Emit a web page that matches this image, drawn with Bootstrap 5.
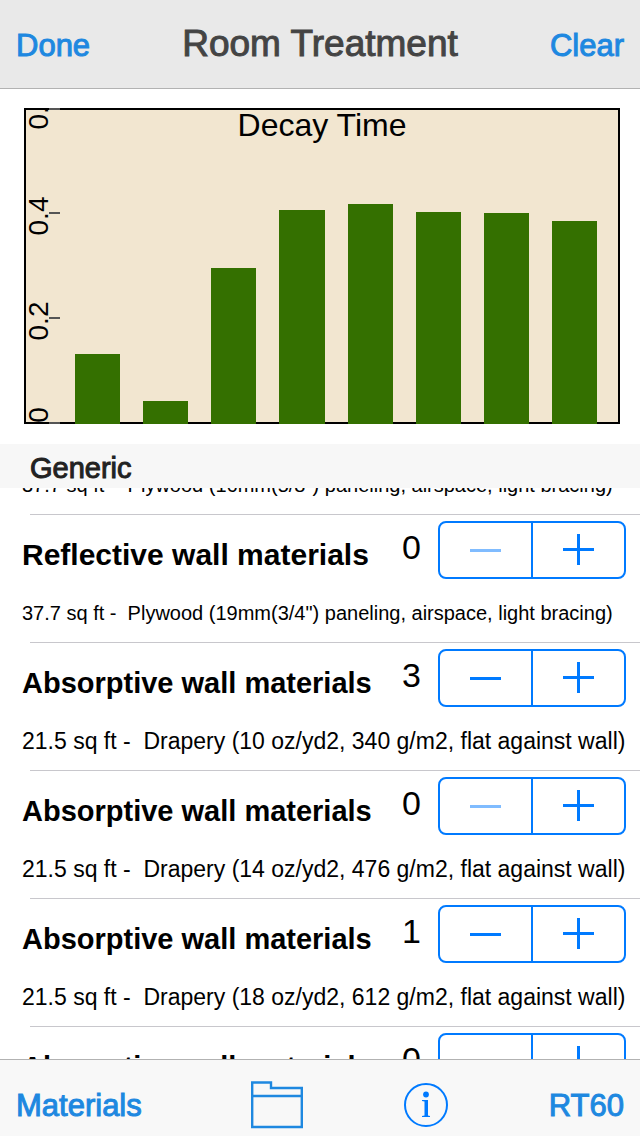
<!DOCTYPE html>
<html lang="en">
<head>
<meta charset="utf-8">
<meta name="viewport" content="width=device-width, initial-scale=1">
<title>Room Treatment</title>
<link href="https://cdn.jsdelivr.net/npm/bootstrap@5.3.0/dist/css/bootstrap.min.css" rel="stylesheet">
<style>
  body { font-family: "Liberation Sans", Arial, sans-serif; color: #000; background: #fff; }
  .medium { -webkit-text-stroke: 1px currentColor; }
  .app-link { font-size: 31px; line-height: 36px; color: #1e88e0; text-decoration: none; }
  .top-bar { background: #e9e9e9; border-bottom: 1px solid #b2b2b2; padding: 24px 16px; }
  .top-bar h1 { font-size: 37px; line-height: 40px; color: #444; font-weight: 400; }
  .chart { height: 316px; margin: 19px 20px 20px 24px; background: #f2e6d0; box-shadow: inset 0 0 0 2px #000; }
  .chart-title { font-size: 32px; line-height: 34px; }
  .axis { width: 51px; font-size: 28px; }
  .bars { gap: 23px; padding-right: 23px; }
  .bar { flex: 1 1 0; background: #347000; }
  .section-name { font-size: 29px; line-height: 44px; padding: 2px 30px 0; height: 44px; background: #f7f7f7; color: #222; }
  .scroller { min-height: 0; scrollbar-width: none; }
  .scroller::-webkit-scrollbar { display: none; }
  .material { padding: 6px 14px 0 22px; height: 127px; }
  .separator { height: 1px; margin-left: 30px; background: #c8c7cc; }
  .material h3 { font-size: 30px; line-height: 36px; padding-top: 16px; font-weight: 700; white-space: nowrap; }
  .material output { font-size: 34px; line-height: 40px; padding: 6px 17px 0 0; }
  .material p { font-size: 20px; line-height: 24px; margin-top: 22px; white-space: pre; }
  .material.absorptive h3 { font-size: 29px; }
  .material.absorptive p { font-size: 23px; }
  .stepper { width: 188px; height: 58px; border: 2px solid #007aff; border-radius: 8px; }
  .stepper button { flex: 1 1 0; padding: 0; border: 0; background: none; color: #007aff; }
  .stepper button + button { border-left: 2px solid #007aff; }
  .stepper button:disabled { color: #80bcff; }
  .bottom-bar { background: #f8f8f8; border-top: 1px solid #b2b2b2; height: 77px; padding: 13px 16px 0; }
  .bottom-bar .app-link { padding-top: 3px; }
  .icon-button { border: 0; padding: 0; background: none; }
</style>
</head>
<body>
<div class="vh-100 d-flex flex-column overflow-hidden">
  <header class="top-bar d-flex justify-content-between flex-shrink-0">
    <a href="#" class="app-link medium pt-1">Done</a>
    <h1 class="medium m-0">Room Treatment</h1>
    <a href="#" class="app-link medium pt-1">Clear</a>
  </header>

  <section class="chart d-flex flex-shrink-0 position-relative" aria-label="Decay Time">
    <div class="chart-title position-absolute top-0 start-0 w-100 text-center">Decay Time</div>
    <svg class="axis h-100 flex-shrink-0" viewBox="0 0 51 316">
      <g stroke="#555" stroke-width="2"><path d="M25 1h11M25 105h11M25 210h11M25 315h11"/></g>
      <g text-anchor="middle">
        <text transform="translate(24 2) rotate(-90)">0.6</text>
        <text transform="translate(24 108) rotate(-90)">0.4</text>
        <text transform="translate(24 213) rotate(-90)">0.2</text>
        <text transform="translate(24 307) rotate(-90)">0</text>
      </g>
    </svg>
    <div class="bars d-flex align-items-end flex-fill h-100" id="bars"></div>
  </section>

  <h2 class="section-name medium m-0 flex-shrink-0 fw-normal">Generic</h2>
  <main class="scroller flex-fill overflow-auto" id="scroller">
    <ul class="list-unstyled m-0" id="materials"></ul>
  </main>

  <footer class="bottom-bar d-flex justify-content-between align-items-center flex-shrink-0">
    <a href="#" class="app-link medium me-2">Materials</a>
    <button class="icon-button" aria-label="Open folder">
      <svg class="d-block" width="52" height="48" viewBox="0 0 52 48" fill="none" stroke="#1e88e0" stroke-width="2.400"><path d="M1.200 1.500H20V7H50.800V46H1.200ZM1.200 15H51" /></svg>
    </button>
    <button class="icon-button" aria-label="Information">
      <svg class="d-block" width="44" height="44" viewBox="0 0 44 44" fill="#007aff"><circle cx="22" cy="22" r="21" fill="none" stroke="#007aff" stroke-width="2"/><circle cx="22" cy="11.500" r="2.900"/><path d="M18 17H24V32.500L26 33V34H18V33L20.500 32.500V18.500L18 18Z"/></svg>
    </button>
    <a href="#" class="app-link medium">RT60</a>
  </footer>
</div>

<script src="https://cdn.jsdelivr.net/npm/bootstrap@5.3.0/dist/js/bootstrap.bundle.min.js"></script>
<script>
  const axisMax = 0.6;
  const decay = [0.133, 0.043, 0.296, 0.407, 0.418, 0.403, 0.401, 0.385];
  document.getElementById('bars').innerHTML = decay
    .map(t => `<div class="bar" style="height:${(t / axisMax * 100).toFixed(1)}%"></div>`).join('');

  const materials = [
    ['Reflective', 0, '37.7 sq ft -  Plywood (16mm(5/8") paneling, airspace, light bracing)'],
    ['Reflective', 0, '37.7 sq ft -  Plywood (19mm(3/4") paneling, airspace, light bracing)'],
    ['Absorptive', 3, '21.5 sq ft -  Drapery (10 oz/yd2, 340 g/m2, flat against wall)'],
    ['Absorptive', 0, '21.5 sq ft -  Drapery (14 oz/yd2, 476 g/m2, flat against wall)'],
    ['Absorptive', 1, '21.5 sq ft -  Drapery (18 oz/yd2, 612 g/m2, flat against wall)'],
    ['Absorptive', 0, '']
  ];
  const list = document.getElementById('materials');
  list.innerHTML = materials.map(([kind, count, detail], i) => `
    <li>
      <div class="material ${kind.toLowerCase()}">
        <div class="d-flex align-items-start">
          <h3 class="m-0 me-auto" id="name${i}">${kind} wall materials</h3>
          <output aria-labelledby="name${i}">${count}</output>
          <div class="stepper d-flex flex-shrink-0" role="group" aria-labelledby="name${i}">
            <button type="button" data-step="-1" aria-label="Fewer"${count ? '' : ' disabled'}>
              <svg class="d-block mx-auto" width="32" height="32" stroke="currentColor" stroke-width="3"><path d="M0 16.500H31"/></svg>
            </button>
            <button type="button" data-step="1" aria-label="More">
              <svg class="d-block mx-auto" width="32" height="32" stroke="currentColor" stroke-width="3"><path d="M0 15.500H31M15.500 0V31"/></svg>
            </button>
          </div>
        </div>
        <p class="mb-0">${detail}</p>
      </div>
      <div class="separator"></div>
    </li>`).join('');

  list.addEventListener('click', e => {
    const button = e.target.closest('[data-step]');
    if (!button) return;
    const row = button.closest('.material');
    const out = row.querySelector('output');
    out.value = Math.max(0, Number(out.value) + Number(button.dataset.step));
    row.querySelector('[data-step="-1"]').disabled = out.value === '0';
  });
  document.getElementById('scroller').scrollTop = 101;
</script>
</body>
</html>
